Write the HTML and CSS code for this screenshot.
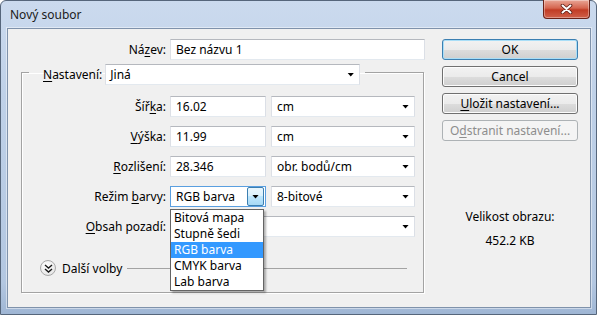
FILE: index.html
```html
<!DOCTYPE html>
<html lang="cs">
<head>
    <meta charset="UTF-8">
    <meta name="viewport" content="width=device-width, initial-scale=1.0">
    <title>Nový soubor</title>
    <link rel="stylesheet" href="styles.css">
</head>
<body>
    <div class="window">
        <div class="titlebar">
            <span class="title">Nový soubor</span>
            <button class="close" aria-label="Zavřít">
                <svg width="13" height="10" viewBox="0 0 13 10">
                    <path d="M2.5 1.5 L10.5 8.5 M10.5 1.5 L2.5 8.5" stroke="#5a1a12" stroke-width="3.6" stroke-linecap="round"/>
                    <path d="M2.5 1.5 L10.5 8.5 M10.5 1.5 L2.5 8.5" stroke="#fff" stroke-width="2" stroke-linecap="round"/>
                </svg>
            </button>
        </div>

        <div class="client">
            <div class="main">
                <div class="name-row">
                    <label class="name-label">Ná<u>z</u>ev:</label>
                    <div class="textbox name-box">Bez názvu 1</div>
                </div>

                <fieldset class="group">
                    <legend>
                        <div class="legend-inner">
                            <label><u>N</u>astavení:</label>
                            <div class="combo preset"><span>Jiná</span><i class="arrow"></i></div>
                        </div>
                    </legend>

                    <div class="fields">
                        <label class="lbl">Šíř<u>k</u>a:</label>
                        <div class="textbox num">16.02</div>
                        <div class="combo"><span>cm</span><i class="arrow"></i></div>

                        <label class="lbl"><u>V</u>ýška:</label>
                        <div class="textbox num">11.99</div>
                        <div class="combo"><span>cm</span><i class="arrow"></i></div>

                        <label class="lbl"><u>R</u>ozlišení:</label>
                        <div class="textbox num">28.346</div>
                        <div class="combo"><span>obr. bodů/cm</span><i class="arrow"></i></div>

                        <label class="lbl">Režim <u>b</u>arvy:</label>
                        <div class="combo mode open">
                            <span>RGB barva</span>
                            <span class="drop-btn"><i class="arrow"></i></span>
                            <ul class="popup">
                                <li>Bitová mapa</li>
                                <li>Stupně šedi</li>
                                <li class="selected">RGB barva</li>
                                <li>CMYK barva</li>
                                <li>Lab barva</li>
                            </ul>
                        </div>
                        <div class="combo"><span>8-bitové</span><i class="arrow"></i></div>

                        <label class="lbl"><u>O</u>bsah pozadí:</label>
                        <div class="combo span2"><span></span><i class="arrow"></i></div>
                    </div>

                    <div class="more">
                        <span class="more-icon">
                            <svg width="9" height="9" viewBox="0 0 9 9">
                                <path d="M1 1 L4.5 4 L8 1 M1 5 L4.5 8 L8 5" fill="none" stroke="#1a1a1a" stroke-width="1.4"/>
                            </svg>
                        </span>
                        <span class="more-text">Další volby</span>
                        <span class="more-line"></span>
                    </div>
                </fieldset>
            </div>

            <div class="side">
                <button class="btn default">OK</button>
                <button class="btn">Cancel</button>
                <button class="btn"><u>U</u>ložit nastavení...</button>
                <button class="btn" disabled>O<u>d</u>stranit nastavení...</button>

                <div class="size">
                    <div>Velikost obrazu:</div>
                    <div class="size-value">452.2 KB</div>
                </div>
            </div>
        </div>
    </div>
</body>
</html>
```

FILE: styles.css
```css
* {
    box-sizing: border-box;
}

body {
    margin: 0;
    font-family: "Noto Sans", sans-serif;
    font-size: 12px;
    color: #000;
    background: #fff;
}

u {
    text-decoration-thickness: 1px;
    text-underline-offset: 2px;
}

.window {
    width: 597px;
    height: 315px;
    display: flex;
    flex-direction: column;
    border: 1px solid #56667b;
    border-radius: 6px 6px 0 0;
    background: linear-gradient(#cbdaee, #bfd1e8 30%, #b3c7e1 90%, #9fb6d4);
}

.titlebar {
    height: 27px;
    display: flex;
    justify-content: space-between;
    align-items: flex-start;
}

.title {
    padding: 5px 0 0 9px;
    color: #1b1b1b;
}

.close {
    width: 47px;
    height: 19px;
    margin: -1px 6px 0 0;
    padding: 0;
    border: 1px solid #6b2218;
    border-top: none;
    border-radius: 0 0 4px 4px;
    background: linear-gradient(#e9a696, #d5654f 45%, #c13c25 55%, #d0604a);
    box-shadow: inset 0 0 0 1px rgba(255, 255, 255, 0.35);
    display: flex;
    align-items: center;
    justify-content: center;
}

.client {
    flex: 1;
    display: flex;
    margin: 0 5px 6px 6px;
    padding-top: 10px;
    background: #f0f0f0;
    border: 1px solid #7f92ab;
    box-shadow: 0 0 0 1px rgba(255, 255, 255, 0.45);
}

.main {
    width: 417px;
}

.name-row {
    display: flex;
    align-items: center;
}

.name-label {
    width: 158px;
    margin-right: 4px;
    text-align: right;
}

.textbox,
.combo {
    height: 21px;
    background: #fff;
    border: 1px solid;
    border-color: #b5b8be #dbdfe6 #e3e9ef #dde0e6;
    line-height: 19px;
    padding: 0 5px;
    white-space: nowrap;
}

.name-box {
    width: 255px;
}

.group {
    margin: 0 0 0 13px;
    width: 403px;
    padding: 11px 0 16px 0;
    border: 1px solid #a3a3a3;
    box-shadow: inset 1px 1px 0 #fff, 1px 1px 0 #fff;
    min-width: 0;
}

.group legend {
    margin-left: 7px;
    padding: 4px 5px 0 14px;
}

.legend-inner {
    display: flex;
    align-items: center;
}

.combo {
    display: flex;
    align-items: center;
    justify-content: space-between;
    position: relative;
}

.preset {
    width: 255px;
    margin-left: 3px;
    padding-left: 4px;
}

.arrow {
    display: block;
    width: 7px;
    height: 4px;
    background: #000;
    clip-path: polygon(0 0, 100% 0, 50% 100%);
}

.fields {
    display: grid;
    grid-template-columns: 148px 101px 144px;
    grid-auto-rows: 21px;
    row-gap: 9px;
    align-items: center;
}

.lbl {
    text-align: right;
    padding-right: 4px;
}

.num {
    width: 96px;
}

.span2 {
    grid-column: span 2;
}

.mode {
    width: 96px;
    padding: 0 1px 0 5px;
    border: 1px solid #5a9fe0;
}

.drop-btn {
    width: 17px;
    height: 19px;
    border: 1px solid #3c7fb1;
    border-radius: 2px;
    background: linear-gradient(#eaf6fd, #d9f0fc 50%, #bee6fd 50%, #a7d9f5);
    display: flex;
    align-items: center;
    justify-content: center;
}

.popup {
    position: absolute;
    top: 22px;
    left: -1px;
    width: 94px;
    margin: 0;
    padding: 0;
    list-style: none;
    background: #fff;
    border: 1px solid #646464;
    box-shadow: 2px 2px 2px rgba(0, 0, 0, 0.3);
    z-index: 2;
}

.popup li {
    height: 16px;
    line-height: 16px;
    padding-left: 3px;
}

.popup .selected {
    background: #3399ff;
    color: #fff;
}

.more {
    display: flex;
    align-items: center;
    height: 16px;
    margin-top: 23px;
    padding: 0 16px 0 18px;
}

.more-icon {
    width: 16px;
    height: 16px;
    border: 1px solid #a9a9a9;
    border-radius: 50%;
    background: radial-gradient(circle at 40% 35%, #fff, #ececec 60%, #dcdcdc);
    display: flex;
    align-items: center;
    justify-content: center;
}

.more-text {
    margin-left: 6px;
}

.more-line {
    flex: 1;
    height: 1px;
    margin: 1px 0 0 5px;
    background: #a3a3a3;
}

.side {
    width: 136px;
    margin-left: 17px;
    display: flex;
    flex-direction: column;
    gap: 6px;
}

.btn {
    height: 21px;
    padding: 0;
    font-family: inherit;
    font-size: 12px;
    color: #000;
    border: 1px solid #707070;
    border-radius: 3px;
    background: linear-gradient(#f2f2f2, #ebebeb 50%, #dddddd 50%, #cfcfcf);
    box-shadow: inset 0 0 0 1px #fcfcfc;
}

.btn.default {
    border-color: #3c7fb1;
    box-shadow: inset 0 0 0 1px #a9def7;
}

.btn:disabled {
    color: #8d8d8d;
    border-color: #adb2b5;
    background: #f4f4f4;
    box-shadow: none;
}

.size {
    margin-top: 62px;
    text-align: center;
    line-height: 16px;
}

.size-value {
    margin-top: 8px;
}
```
